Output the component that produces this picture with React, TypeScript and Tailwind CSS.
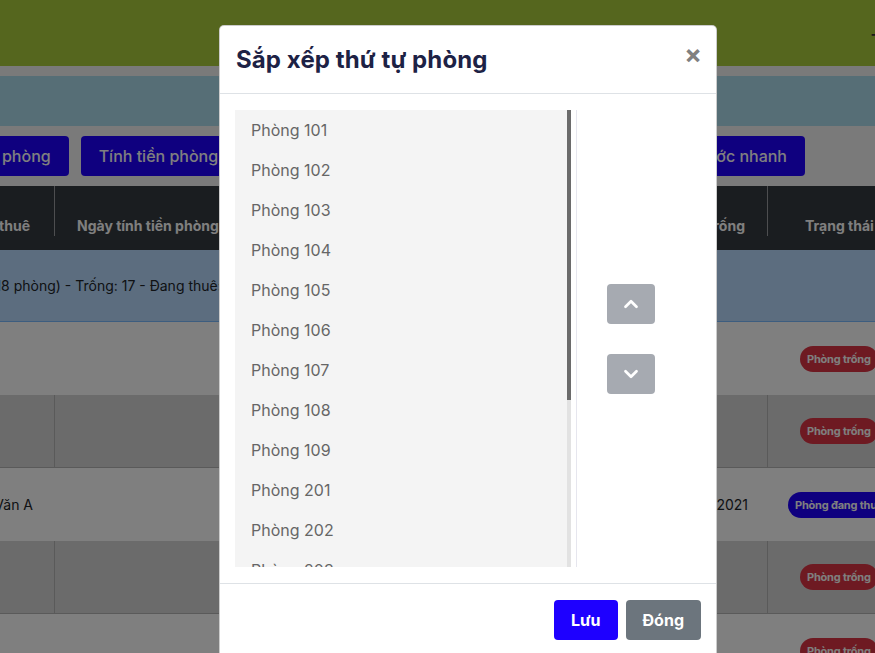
import { ChevronDown, ChevronUp } from "lucide-react";

const rooms = [
  "Phòng 101",
  "Phòng 102",
  "Phòng 103",
  "Phòng 104",
  "Phòng 105",
  "Phòng 106",
  "Phòng 107",
  "Phòng 108",
  "Phòng 109",
  "Phòng 201",
  "Phòng 202",
  "Phòng 203",
  "Phòng 204",
];

const rows = [
  { name: "", date: "", status: "trong", shaded: false },
  { name: "", date: "", status: "trong", shaded: true },
  { name: "Nguyễn Văn A", date: "01/01/2021", status: "thue", shaded: false },
  { name: "", date: "", status: "trong", shaded: true },
  { name: "", date: "", status: "trong", shaded: false },
];

function Badge({ status }: { status: string }) {
  if (status === "thue") {
    return (
      <span className="whitespace-nowrap rounded-full bg-[#1e00ff] px-[7px] py-[6px] text-[11px] font-bold leading-[14px] tracking-[-0.2px] text-white">
        Phòng đang thuê
      </span>
    );
  }
  return (
    <span className="whitespace-nowrap rounded-full bg-[#dc3545] px-[7px] py-[6px] text-[11px] font-bold leading-[14px] tracking-[-0.2px] text-white">
      Phòng trống
    </span>
  );
}

function Page() {
  return (
    <div className="flex w-[875px] flex-col">
      <div className="flex h-[66px] items-center justify-end bg-[#aacc3c] text-[22px] text-[#333]">
        <span className="-mr-[9px]">+</span>
      </div>
      <div className="h-[10px] bg-[#f4f4f4]" />
      <div className="h-[50px] bg-[#acdcec]" />
      <div className="flex h-[60px] items-center gap-[12px] bg-[#f4f4f4]">
        <button className="-ml-[64px] h-[40px] whitespace-nowrap rounded-[4px] bg-[#1e00ff] px-[18px] text-[16px] font-medium text-white">
          Thêm phòng
        </button>
        <button className="h-[40px] whitespace-nowrap rounded-[4px] bg-[#1e00ff] px-[18px] text-[16px] font-medium text-white">
          Tính tiền phòng
        </button>
        <div className="flex-1" />
        <button className="mr-[70px] h-[40px] whitespace-nowrap rounded-[4px] bg-[#1e00ff] px-[18px] text-[16px] font-medium text-white">
          Chốt điện nước nhanh
        </button>
      </div>
      <div className="flex h-[64px] bg-[#343a40] pb-[14px] text-[14px] font-bold leading-[20px] text-white">
        <div className="flex w-[55px] items-end justify-end overflow-hidden whitespace-nowrap border-r border-white/50 pr-[24px]">
          Ngày thuê
        </div>
        <div className="flex flex-1 items-end whitespace-nowrap pl-[22px]">Ngày tính tiền phòng</div>
        <div className="flex w-[120px] items-end justify-end whitespace-nowrap border-r border-white/50 pr-[22px]">
          Ngày trống
        </div>
        <div className="flex w-[107px] items-end overflow-hidden whitespace-nowrap pl-[37px]">Trạng thái</div>
      </div>
      <div className="flex h-[72px] items-center overflow-hidden whitespace-nowrap border-b border-[#7abaff] bg-[#b8daff] text-[14px] text-[#212529]">
        <span className="-ml-[56px]">Tầng 1 (18 phòng) - Trống: 17 - Đang thuê: 1</span>
      </div>
      {rows.map((r, i) => (
        <div
          key={i}
          className={
            r.shaded
              ? "flex h-[73px] border-b border-[#b5b5b5] bg-[#d7d7d7] text-[14px] text-[#212529]"
              : "flex h-[73px] bg-white text-[14px] text-[#212529]"
          }
        >
          <div
            className={
              r.shaded
                ? "flex w-[55px] items-center justify-end overflow-hidden whitespace-nowrap border-r border-[#b5b5b5] pr-[22px]"
                : "flex w-[55px] items-center justify-end overflow-hidden whitespace-nowrap pr-[22px]"
            }
          >
            {r.name}
          </div>
          <div className="flex-1" />
          <div
            className={
              r.shaded
                ? "flex w-[120px] items-center justify-end border-r border-[#b5b5b5] pr-[20px]"
                : "flex w-[120px] items-center justify-end pr-[20px]"
            }
          >
            {r.date}
          </div>
          <div
            className={
              r.status === "thue"
                ? "flex w-[107px] items-center overflow-hidden pl-[20px]"
                : "flex w-[107px] items-center overflow-hidden pl-[32px]"
            }
          >
            <Badge status={r.status} />
          </div>
        </div>
      ))}
    </div>
  );
}

export default function App() {
  return (
    <div className="relative h-[653px] w-[875px] overflow-hidden font-['Inter','Noto_Sans',sans-serif]">
      <Page />
      <div className="absolute inset-0 bg-black/50" />
      <div className="absolute left-[219px] top-[25px] w-[498px] rounded-[5px] border border-black/20 bg-white">
        <div className="flex h-[68px] items-center justify-between border-b border-[#dee2e6] px-[16px]">
          <h5 className="text-[24px] font-bold leading-none tracking-[0.1px] text-[#1d2245]">Sắp xếp thứ tự phòng</h5>
          <button className="-mr-[2px] -mt-[10px] text-[26px] font-bold leading-none text-[#808080]">×</button>
        </div>
        <div className="-ml-[1px] flex p-[16px]">
          <div className="flex h-[457px] w-[342px] border-r border-[#e6e6ee] pr-[5px]">
            <div className="flex flex-1 flex-col overflow-hidden bg-[#f4f4f4]">
              {rooms.map((r) => (
                <div key={r} className="flex h-[40px] shrink-0 items-center pl-[16px] text-[16px] text-[#666]">
                  {r}
                </div>
              ))}
            </div>
            <div className="flex w-[4px] flex-col bg-[#e2e2e2]">
              <div className="h-[290px] bg-[#6b6b6b]" />
            </div>
          </div>
          <div className="flex flex-col justify-center gap-[30px] pl-[30px]">
            <button className="flex h-[40px] w-[48px] items-center justify-center rounded-[4px] bg-[#a6aab1] text-white">
              <ChevronUp size={22} strokeWidth={3} />
            </button>
            <button className="flex h-[40px] w-[48px] items-center justify-center rounded-[4px] bg-[#a6aab1] text-white">
              <ChevronDown size={22} strokeWidth={3} />
            </button>
          </div>
        </div>
        <div className="flex justify-end gap-[8px] border-t border-[#dee2e6] py-[16px] pl-[16px] pr-[15px]">
          <button className="h-[40px] rounded-[4px] bg-[#1e00ff] px-[17px] text-[16px] font-bold text-white">Lưu</button>
          <button className="h-[40px] rounded-[4px] bg-[#6c757d] px-[17px] text-[16px] font-bold text-white">Đóng</button>
        </div>
      </div>
    </div>
  );
}
